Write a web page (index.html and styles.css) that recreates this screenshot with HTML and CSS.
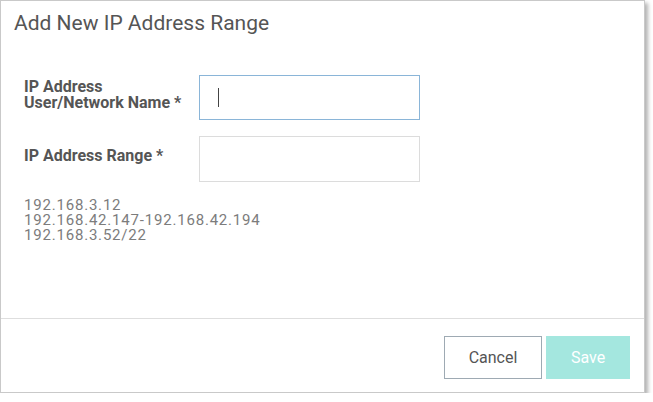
FILE: index.html
```html
<!DOCTYPE html>
<html lang="en">
<head>
<meta charset="utf-8">
<title>Add New IP Address Range</title>
<link rel="stylesheet" href="styles.css">
</head>
<body>
<div class="dialog">
  <div class="header">
    <h1 class="title">Add New IP Address Range</h1>
  </div>
  <div class="form">
    <div class="row">
      <label class="label">IP Address<br>User/Network Name *</label>
      <div class="field field-focus"><span class="caret"></span></div>
    </div>
    <div class="row row-second">
      <label class="label">IP Address Range *</label>
      <div class="field field-tall"></div>
    </div>
    <div class="hint">
      <div>192.168.3.12</div>
      <div>192.168.42.147-192.168.42.194</div>
      <div>192.168.3.52/22</div>
    </div>
  </div>
  <div class="footer">
    <button class="btn btn-cancel" type="button">Cancel</button>
    <button class="btn btn-save" type="button">Save</button>
  </div>
</div>
</body>
</html>
```

FILE: styles.css
```css
html, body {
  margin: 0;
  padding: 0;
  background: #fff;
}

body {
  font-family: Roboto, "Noto Sans", "Liberation Sans", sans-serif;
  color: #555;
}

.dialog {
  width: 645px;
  height: 393px;
  box-sizing: border-box;
  border: 1px solid #c9c9c9;
  background: #fff;
  box-shadow: 3px 3px 4px rgba(0, 0, 0, 0.3);
  display: flex;
  flex-direction: column;
}

.header {
  padding: 10px 13px 0;
}

.title {
  margin: 0;
  font-size: 21px;
  line-height: 24px;
  font-weight: 400;
  color: #555;
}

.form {
  padding: 40px 0 0 23px;
}

.row {
  display: flex;
  align-items: center;
}

.row-second {
  margin-top: 16px;
}

.label {
  width: 175px;
  font-size: 16px;
  line-height: 16px;
  font-weight: 700;
  color: #555;
  padding-bottom: 6px;
}

.field {
  width: 221px;
  height: 45px;
  box-sizing: border-box;
  border: 1px solid #dcdcdc;
  background: #fff;
  display: flex;
  align-items: center;
  padding-left: 18px;
}

.field-tall {
  height: 46px;
}

.field-focus {
  border-color: #8ab5d8;
}

.caret {
  width: 1px;
  height: 19px;
  background: #444;
}

.hint {
  margin-top: 16px;
  font-size: 15px;
  line-height: 15px;
  letter-spacing: 0.8px;
  color: #7c7c7c;
}

.footer {
  margin-top: auto;
  border-top: 1px solid #dedede;
  padding: 17px 14px 13px;
  display: flex;
  justify-content: flex-end;
  gap: 4px;
}

.btn {
  height: 43px;
  box-sizing: border-box;
  font-family: Roboto, "Noto Sans", "Liberation Sans", sans-serif;
  font-size: 16px;
  border-radius: 0;
  cursor: pointer;
}

.btn-cancel {
  width: 98px;
  background: #fff;
  border: 1px solid #9eaab3;
  color: #555;
}

.btn-save {
  width: 84px;
  background: #a4e7df;
  border: 1px solid #a4e7df;
  color: #fff;
}
```
